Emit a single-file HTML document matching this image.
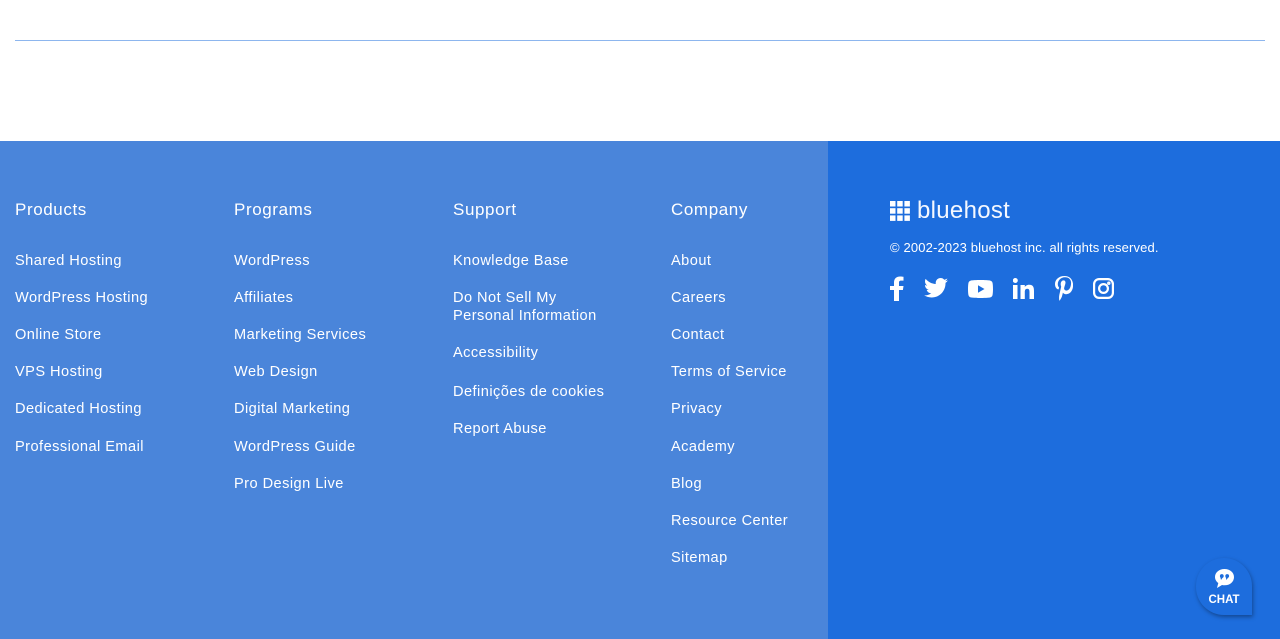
<!DOCTYPE html>
<html><head><style>
body{margin:0;width:1280px;height:639px;overflow:hidden;font-family:"Liberation Sans",sans-serif;background:#fff;position:relative}
.line{position:absolute;left:15px;top:40px;width:1250px;height:1px;background:#8db6ee}
.left{position:absolute;left:0;top:141px;width:828px;height:498px;background:#4a85da}
.right{position:absolute;left:828px;top:141px;width:452px;height:498px;background:#1d6ddd}
.col{position:absolute;top:0;color:#fff}
.col h3{position:absolute;top:59px;margin:0;font-weight:normal;font-size:17px;letter-spacing:.6px;white-space:nowrap}
.col a{position:absolute;font-size:14.6px;letter-spacing:.45px;color:#fff;text-decoration:none;white-space:nowrap;line-height:18px}
.logo{position:absolute;left:89px;top:56px;color:#f4f8ff;font-size:24px;letter-spacing:0.3px}
.grid{position:absolute;left:62px;top:60px;width:20px;height:20px}
.copy{position:absolute;left:62px;top:99px;color:#fff;font-size:13px;letter-spacing:.15px}
.soc{position:absolute;top:135px}
.chat{position:absolute;left:1196px;top:558px;width:56px;height:57px;background:#1d6ddd;border-radius:28px 28px 0 28px;box-shadow:1px 2px 4px rgba(0,0,0,.35);color:#fff;font-weight:bold;font-size:11.5px;text-align:center}
</style></head><body>
<div class="line"></div>
<div class="left">
<div class="col" style="left:15px"><h3>Products</h3>
<a style="top:111px">Shared Hosting</a><a style="top:148px">WordPress Hosting</a><a style="top:185px">Online Store</a><a style="top:222px">VPS Hosting</a><a style="top:259px">Dedicated Hosting</a><a style="top:297px">Professional Email</a></div>
<div class="col" style="left:234px"><h3>Programs</h3>
<a style="top:111px">WordPress</a><a style="top:148px">Affiliates</a><a style="top:185px">Marketing Services</a><a style="top:222px">Web Design</a><a style="top:259px">Digital Marketing</a><a style="top:297px">WordPress Guide</a><a style="top:334px">Pro Design Live</a></div>
<div class="col" style="left:453px"><h3>Support</h3>
<a style="top:111px">Knowledge Base</a><a style="top:148px">Do Not Sell My<br>Personal Information</a><a style="top:203px">Accessibility</a><a style="top:242px">Definições de cookies</a><a style="top:279px">Report Abuse</a></div>
<div class="col" style="left:671px"><h3>Company</h3>
<a style="top:111px">About</a><a style="top:148px">Careers</a><a style="top:185px">Contact</a><a style="top:222px">Terms of Service</a><a style="top:259px">Privacy</a><a style="top:297px">Academy</a><a style="top:334px">Blog</a><a style="top:371px">Resource Center</a><a style="top:408px">Sitemap</a></div>
</div>
<div class="right">
<svg class="grid" viewBox="0 0 20 20" fill="#fff"><rect x="0" y="0" width="5.5" height="5.5"/><rect x="7.2" y="0" width="5.5" height="5.5"/><rect x="14.4" y="0" width="5.5" height="5.5"/><rect x="0" y="7.2" width="5.5" height="5.5"/><rect x="7.2" y="7.2" width="5.5" height="5.5"/><rect x="14.4" y="7.2" width="5.5" height="5.5"/><rect x="0" y="14.4" width="5.5" height="5.5"/><rect x="7.2" y="14.4" width="5.5" height="5.5"/><rect x="14.4" y="14.4" width="5.5" height="5.5"/></svg>
<div class="logo">bluehost</div>
<div class="copy">© 2002-2023 bluehost inc. all rights reserved.</div>
<svg class="soc" style="left:62px" width="14" height="25" viewBox="0 0 14 25" fill="#fff"><path d="M4 25V14H0v-4h4V6.5C4 2.5 6.5 0.5 10 0.5c1.5 0 3 .2 3.5.3v3.8h-2.3C9.3 4.6 9 5.5 9 6.8V10h4.5l-.6 4H9v11z"/></svg>
<svg class="soc" style="left:96px;top:137px" width="24" height="20" viewBox="0 0 24 20" fill="#fff"><path d="M24 2.4c-.9.4-1.8.6-2.800.8 1-.6 1.8-1.600 2.200-2.700-1 .6-2 1-3.100 1.200C19.3.6 18 0 16.6 0c-2.7 0-4.9 2.2-4.9 4.9 0 .4 0 .8.1 1.1C7.7 5.8 4.1 3.9 1.7.9c-.4.7-.7 1.6-.7 2.5 0 1.7.9 3.2 2.2 4.1-.8 0-1.6-.2-2.2-.6v.1c0 2.4 1.7 4.4 3.9 4.8-.4.1-.8.2-1.3.2-.3 0-.6 0-.9-.1.6 2 2.4 3.4 4.6 3.4-1.7 1.3-3.8 2.1-6.1 2.1-.4 0-.8 0-1.2-.1 2.2 1.4 4.8 2.2 7.5 2.2 9.1 0 14-7.5 14-14v-.6c1-.7 1.8-1.6 2.5-2.5z"/></svg>
<svg class="soc" style="left:140px;top:139px" width="25" height="18" viewBox="0 0 25 18" fill="#fff"><path d="M24.5 2.8C24.2 1.7 23.4.9 22.3.6 20.4 0 12.5 0 12.5 0S4.6 0 2.7.6C1.6.9.8 1.7.5 2.8 0 4.8 0 9 0 9s0 4.2.5 6.2c.3 1.1 1.1 1.9 2.2 2.2 1.9.6 9.8.6 9.8.6s7.9 0 9.8-.6c1.1-.3 1.9-1.1 2.2-2.2.5-2 .5-6.2.5-6.2s0-4.2-.5-6.2zM10 12.8V5.2L16.5 9z"/></svg>
<svg class="soc" style="left:185px;top:137px" width="21" height="21" viewBox="0 0 21 21" fill="#fff"><rect x="0" y="7" width="4.5" height="14"/><circle cx="2.3" cy="2.5" r="2.5"/><path d="M7.5 7h4.3v2c.6-1.1 2.1-2.3 4.3-2.3 4.5 0 4.9 3 4.9 6.8V21h-4.5v-6.7c0-1.6 0-3.6-2.2-3.6s-2.5 1.7-2.5 3.5V21H7.5z"/></svg>
<svg class="soc" style="left:227px;top:135px" width="18" height="25" viewBox="0 0 18 25" fill="#fff"><path d="M9.5 0C3.5 0 0 3.9 0 8c0 2.5 1 4.6 3 5.4.3.1.6 0 .7-.4l.3-1.1c.1-.4 0-.5-.2-.8-.6-.7-1-1.6-1-2.9 0-3.7 2.8-7 7.2-7 3.900 0 6.100 2.400 6.100 5.600 0 4.200-1.900 7.800-4.600 7.800-1.500 0-2.700-1.300-2.300-2.800.4-1.900 1.300-3.900 1.300-5.200 0-1.200-.6-2.200-2-2.200-1.600 0-2.800 1.600-2.800 3.800 0 1.400.5 2.300.5 2.300L4.3 19c-.5 2.400-.1 5.200 0 5.500 0 .2.2.2.3.1.1-.2 1.800-2.300 2.400-4.400.2-.6.9-3.600.9-3.600.5.9 1.800 1.600 3.200 1.600 4.200 0 7-3.800 7-8.900C18.100 3.600 14.800 0 9.500 0z"/></svg>
<svg class="soc" style="left:265px;top:137px" width="21" height="21" viewBox="0 0 21 21" fill="none" stroke="#fff" stroke-width="2.2"><rect x="1.1" y="1.1" width="18.8" height="18.8" rx="5"/><circle cx="10.5" cy="10.5" r="4.4"/><circle cx="15.8" cy="5.2" r=".6" fill="#fff"/></svg>
</div>
<div class="chat"><svg style="position:absolute;left:18px;top:10px" width="21" height="21" viewBox="0 0 21 21"><path d="M10.5 1C5 1 1 4.6 1 9c0 2.5 1.3 4.6 3.3 6L3 20l5-3c.8.2 1.6.3 2.5.3 5.5 0 9.5-3.6 9.5-8.2S16 1 10.5 1z" fill="#fff"/><g fill="#1d6ddd"><circle cx="7.8" cy="8" r="1.9"/><circle cx="13.2" cy="8" r="1.9"/><path d="M6.2 8.5 L7 12 L9.5 8.5z M11.6 8.5 L12.4 12 L14.9 8.5z"/></g></svg><div style="position:absolute;left:0;right:0;top:36px">CHAT</div></div>
</body></html>
